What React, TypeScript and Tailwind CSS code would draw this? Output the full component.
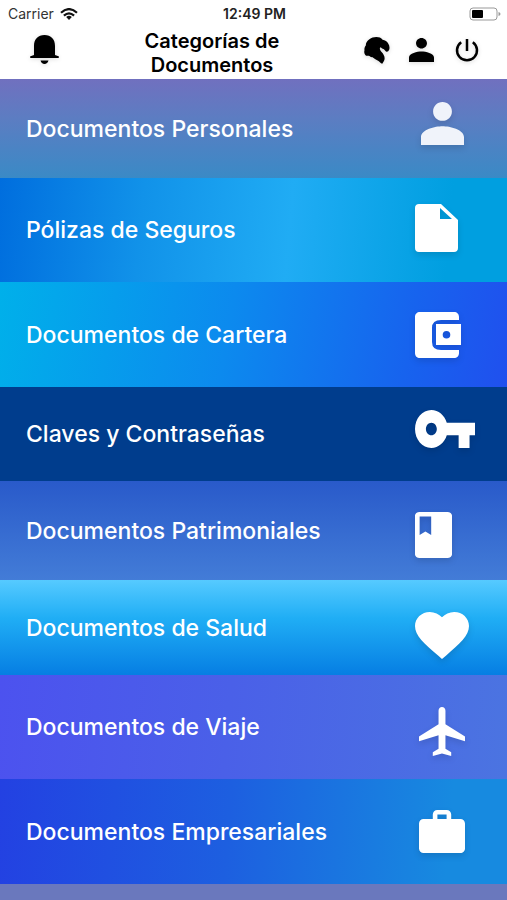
const categories = [
  {
    name: "Documentos Personales",
    row: "h-[99px] bg-[linear-gradient(180deg,#7070bf,#5c7dc2_40%,#3a8ac6)]",
    slot: "pl-1.5 pb-2.5",
    icon: "w-[43px] h-[43px] text-[#f0f3fa]",
    viewBox: "4 4 16 16",
    path: "M12 11c1.940 0 3.500-1.560 3.500-3.500s-1.560-3.500-3.500-3.500-3.500 1.560-3.500 3.500 1.560 3.500 3.500 3.500zM12 13c-2.670 0-8 1.200-8 4V20h16v-3c0-2.800-5.330-4-8-4z",
  },
  {
    name: "Pólizas de Seguros",
    row: "h-[104px] bg-[linear-gradient(95deg,#006ede,#1192e9_28%,#20acf4_57%,#009fe0_88%)]",
    slot: "pb-1",
    icon: "w-[43px] h-12 text-white",
    viewBox: "0 0 43 48",
    path: "M4 0H26L43 16V44C43 46.500 41.500 48 39 48H4C1.500 48 0 46.500 0 44V4C0 1.500 1.500 0 4 0zM25 4V15H37z",
  },
  {
    name: "Documentos de Cartera",
    row: "h-[105px] bg-[linear-gradient(100deg,#00b0ea,#0c8aee_45%,#1763ee_80%,#2050ee)]",
    slot: "",
    icon: "w-[46px] h-[46px] text-white",
    viewBox: "0 0 46 46",
    path: "M5 0H39C42 0 44 2 44 5V8H26Q17 8 17 16V30Q17 38 26 38H44V41C44 44 42 46 39 46H5C2 46 0 44 0 41V5C0 2 2 0 5 0zM21 12H46V33H21zM31.500 19a3.800 3.800 0 1 0 0 7.600a3.800 3.800 0 1 0 0-7.600z",
  },
  {
    name: "Claves y Contraseñas",
    row: "h-[94px] bg-[#003d8d]",
    slot: "pb-2.5",
    icon: "w-[60px] h-[38px] text-white",
    viewBox: "1 6 22 12",
    path: "M12.650 10C11.830 7.670 9.610 6 7 6c-3.310 0-6 2.690-6 6s2.690 6 6 6c2.610 0 4.830-1.670 5.650-4H17v4h4v-4h2v-4H12.650zM7 14c-1.100 0-2-.9-2-2s.9-2 2-2 2 .9 2 2-.9 2-2 2z",
  },
  {
    name: "Documentos Patrimoniales",
    row: "h-[99px] bg-[linear-gradient(180deg,#295aca,#437cd7)]",
    slot: "pt-2",
    icon: "w-[37px] h-[46px] text-white",
    viewBox: "4 2 16 20",
    path: "M18 2H6c-1.100 0-2 .7-2 1.500v17c0 .8.9 1.500 2 1.500h12c1.100 0 2-.7 2-1.500v-17c0-.8-.9-1.500-2-1.500zM6 4h5v8l-2.500-1.500L6 12V4z",
  },
  {
    name: "Documentos de Salud",
    row: "h-[95px] bg-[linear-gradient(180deg,#56caff,#20aef5_40%,#067ee3)]",
    slot: "pt-4",
    icon: "w-[54px] h-[47px] text-white",
    viewBox: "2 3 20 18.350",
    path: "M12 21.350l-1.450-1.320C5.400 15.360 2 12.280 2 8.500 2 5.420 4.420 3 7.500 3c1.740 0 3.410.810 4.500 2.090C13.090 3.810 14.760 3 16.500 3 19.580 3 22 5.420 22 8.500c0 3.780-3.400 6.860-8.550 11.540L12 21.350z",
  },
  {
    name: "Documentos de Viaje",
    row: "h-[104px] bg-[linear-gradient(95deg,#4c52ef,#4a60e8_45%,#4b74e1)]",
    slot: "pl-1 pt-2",
    icon: "w-[46px] h-[49px] text-white",
    viewBox: "2 2 20 20",
    path: "M22 16v-2l-8.500-5V3.500c0-.83-.67-1.500-1.500-1.500s-1.500.67-1.500 1.500V9L2 14v2l8.500-2.500V19L8 20.500V22l4-1 4 1v-1.500L13.500 19v-5.500L22 16z",
  },
  {
    name: "Documentos Empresariales",
    row: "h-[105px] bg-[linear-gradient(95deg,#2341e2,#1d5fe0_45%,#178ae0_88%)]",
    slot: "pl-1",
    icon: "w-[46px] h-[43px] text-white",
    viewBox: "2 2 20 19",
    path: "M20 6h-4V4c0-1.110-.89-2-2-2h-4c-1.110 0-2 .89-2 2v2H4c-1.110 0-1.990.89-1.990 2L2 19c0 1.110.89 2 2 2h16c1.110 0 2-.89 2-2V8c0-1.110-.89-2-2-2zm-6 0h-4V4h4v2z",
  },
]

function StatusBar() {
  return (
    <div className="grid h-7 grid-cols-3 items-center pl-2 pr-1.5 text-sm leading-5">
      <div className="flex items-center gap-1.5 text-[#333]">
        <span>Carrier</span>
        <svg className="h-3 w-[18px]" viewBox="0 0 18 12" fill="none" stroke="#111" strokeWidth="2.200">
          <path d="M1 4.800Q9-2.600 17 4.800" />
          <path d="M3.900 7.600Q9 3 14.100 7.600" />
          <path d="M6.200 9Q9 6.600 11.800 9L9 12z" fill="#111" stroke="none" />
        </svg>
      </div>
      <span className="text-center font-semibold text-[#222]">12:49 PM</span>
      <svg className="h-3.5 w-8 justify-self-end" viewBox="0 0 32 14">
        <rect x="1" y="1" width="27" height="12" rx="3" fill="none" stroke="#999" />
        <rect x="3" y="3" width="11" height="8" rx="1" fill="#000" />
        <path d="M29.500 5v4q2-.5 2-2t-2-2z" fill="#999" />
      </svg>
    </div>
  )
}

function Header() {
  return (
    <div className="flex h-[51px] items-start">
      <div className="flex h-11 w-[89px] items-center justify-center">
        <button aria-label="Notificaciones" className="cursor-pointer drop-shadow-sm">
          <svg className="h-[30px] w-[29px]" viewBox="0 0 29 30" fill="currentColor">
            <path d="M14.500 0C21 0 25 4 25 11v9l3.500 1.200c.8.400.5 1.800-.5 1.800H1c-1 0-1.300-1.400-.5-1.800L4 20V11C4 4 8 0 14.500 0zM10.500 25.500h8c-.6 2.200-2 3.500-4 3.500s-3.400-1.300-4-3.500z" />
          </svg>
        </button>
      </div>
      <h1 className="flex-1 pt-px text-center text-xl leading-6 font-semibold">
        Categorías de
        <br />
        Documentos
      </h1>
      <div className="flex h-11 w-[172px] justify-end pr-[18px]">
        <button aria-label="Inicio" className="flex w-[45px] cursor-pointer items-center justify-center drop-shadow-sm">
          <svg className="h-[27px] w-[26px]" viewBox="335 107 78 82" fill="currentColor">
            <path d="M351 114C357 109 364 107 372 107C380 107 387 109 391 115C398 116 406 121 408 127C412 133 413 140 411 146C409 150 407 152 404 152C400 151 398 146 395 144C391 143 388 141 385 138C382 139 382 143 384 147C387 153 392 155 394 161C398 168 398 174 395 180L390 188C385 187 381 180 376 178C370 177 366 172 359 168C355 170 352 163 348 164L341 164C336 160 334 153 336 147C335 142 337 137 340 133C340 125 344 118 351 114z" />
          </svg>
        </button>
        <button aria-label="Perfil" className="flex w-[45px] cursor-pointer items-center justify-center drop-shadow-sm">
          <svg className="h-6 w-[25px]" viewBox="4 4 16 16" preserveAspectRatio="none" fill="currentColor">
            <path d={categories[0].path} />
          </svg>
        </button>
        <button aria-label="Salir" className="flex w-[45px] cursor-pointer items-center justify-center drop-shadow-sm">
          <svg className="h-6 w-6" viewBox="0 0 24 24" fill="none" stroke="currentColor" strokeWidth="2.500">
            <path d="M12 1v12" />
            <path d="M6.200 4.200a10 10 0 1 0 11.600 0" />
          </svg>
        </button>
      </div>
    </div>
  )
}

export default function App() {
  return (
    <div className="min-h-screen bg-[#6a78bd] font-['Inter','Liberation_Sans',sans-serif]">
      <header className="bg-white text-black">
        <StatusBar />
        <Header />
      </header>
      <ul>
        {categories.map((category) => (
          <li key={category.name}>
            <button className={`flex w-full cursor-pointer items-center justify-between pl-[26px] text-left ${category.row}`}>
              <span className="text-[23px] leading-8 font-medium text-white">{category.name}</span>
              <span className={`w-[92px] shrink-0 ${category.slot}`}>
                <svg
                  className={`block drop-shadow-md ${category.icon}`}
                  viewBox={category.viewBox}
                  preserveAspectRatio="none"
                  fill="currentColor"
                  fillRule="evenodd">
                  <path d={category.path} />
                </svg>
              </span>
            </button>
          </li>
        ))}
      </ul>
    </div>
  )
}
